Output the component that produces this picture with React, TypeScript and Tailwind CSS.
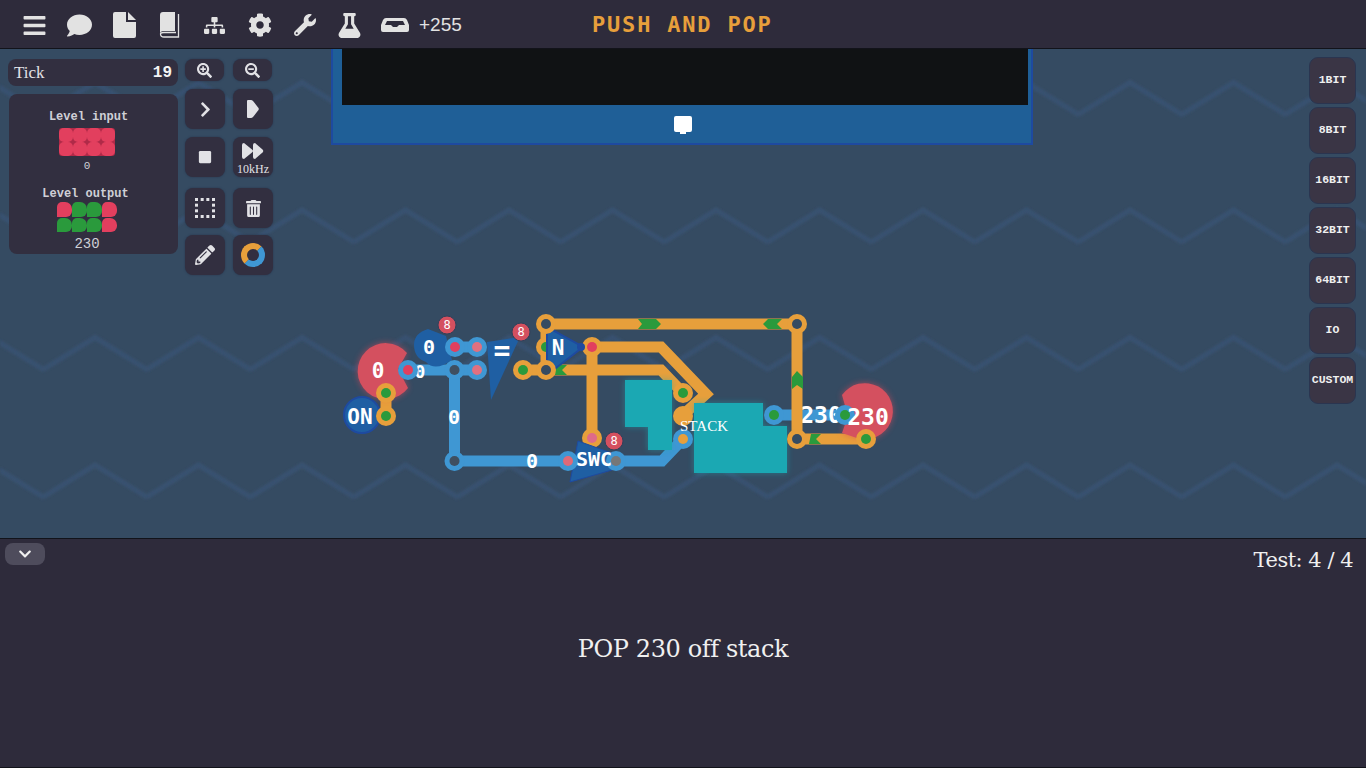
import { FunctionComponent, ReactNode } from "react";
import { FaBars, FaComment, FaSitemap, FaCog, FaWrench, FaFlask, FaSearchPlus, FaSearchMinus, FaChevronRight, FaStop, FaTrashAlt, FaPencilAlt, FaChevronDown } from "react-icons/fa";

const ORANGE = "#e79f3b";
const BLUE = "#3f97d3";
const GREEN = "#2a9a3c";
const RED = "#d4505f";
const PIN_RED = "#e23f5e";
const DARK = "#354b62";
const GATE = "#1f5fa3";
const EDGE = "#1e4aa0";

const FileIcon = () => (
  <svg width={23} height={26} viewBox="0 0 23 26" fill="currentColor">
    <path d="M0 2 Q0 0 2 0 H13 V10 H23 V24 Q23 26 21 26 H2 Q0 26 0 24z" />
    <path d="M15 0 L23 8 H15z" />
  </svg>
);

const BookIcon = () => (
  <svg width={22} height={26} viewBox="0 0 22 26" fill="currentColor">
    <path d="M1 3 Q1 0 4 0 H16 V19 H5 Q1 19 1 22z" />
    <path d="M19.500 2 V25 H5 Q1.500 25 1.500 22 Q1.500 20.500 5 20.500 H17" fill="none" stroke="currentColor" strokeWidth={1.3} />
  </svg>
);

const TrayIcon = () => (
  <svg width={28} height={14} viewBox="0 0 28 14" fill="currentColor">
    <path
      fillRule="evenodd"
      d="M5 0 H23 Q25 0 26 2 L28 7 V12 Q28 14 26 14 H2 Q0 14 0 12 V7 L2 2 Q3 0 5 0z M6 3 L4 7 H10 L12 9 H16 L18 7 H24 L22 3z"
    />
  </svg>
);

const SelectIcon = () => {
  const steps = [0, 5.67, 11.33, 17];
  return (
    <svg width={20} height={20} viewBox="0 0 20 20" fill="currentColor">
      {steps.map((s) => (
        <g key={s}>
          <rect x={s} y={0} width={3} height={3} />
          <rect x={s} y={17} width={3} height={3} />
          <rect x={0} y={s} width={3} height={3} />
          <rect x={17} y={s} width={3} height={3} />
        </g>
      ))}
    </svg>
  );
};

const topIcons = [
  <FaBars className="text-[25px]" />,
  <FaComment className="text-[25px]" />,
  <FileIcon />,
  <BookIcon />,
  <FaSitemap className="text-[21px]" />,
  <FaCog className="text-[24px]" />,
  <FaWrench className="text-[22px]" />,
  <FaFlask className="text-[25px]" />,
  <TrayIcon />,
];

const ToolButton: FunctionComponent<{ children: ReactNode; small?: boolean }> = ({ children, small }) => (
  <div className={`flex flex-col items-center justify-center bg-[#322f40] text-[#e2e2e6] shadow-[0_0_2px_#26334a] ${small ? "h-[22px] w-[39px] rounded-[8px]" : "h-[40px] w-[40px] rounded-[8px]"}`}>
    {children}
  </div>
);

const LevelInputPixels = () => (
  <div className="grid w-[56px] grid-cols-4 rounded-[3px] bg-[#b02a48]">
    {Array.from({ length: 8 }).map((_, i) => (
      <div key={i} className="h-[14px] w-[14px] rounded-[5px] bg-[#e23f5e]" />
    ))}
  </div>
);

const outputBits = [PIN_RED, GREEN, GREEN, PIN_RED, GREEN, GREEN, GREEN, PIN_RED];

const LevelOutputPixels = () => (
  <div className="grid w-[60px] grid-cols-4 gap-y-[1px]">
    {outputBits.map((color, i) => (
      <div
        key={i}
        className="h-[14.500px] w-[15px] rounded-tl-[5px] rounded-tr-[7px] rounded-br-[6px]"
        style={{ backgroundColor: color }}
      />
    ))}
  </div>
);

const Wire: FunctionComponent<{ d: string; color: string }> = ({ d, color }) => (
  <path d={d} fill="none" stroke={color} strokeWidth={11} strokeLinejoin="miter" />
);

const Pin: FunctionComponent<{ x: number; y: number; ring: string; fill: string }> = ({ x, y, ring, fill }) => (
  <g>
    <circle cx={x} cy={y} r={10} fill={ring} />
    <circle cx={x} cy={y} r={5} fill={fill} />
  </g>
);

const Badge: FunctionComponent<{ x: number; y: number }> = ({ x, y }) => (
  <g>
    <circle cx={x} cy={y} r={9} fill={RED} stroke="#33405a" strokeWidth={1} />
    <text x={x} y={y + 4} textAnchor="middle" fontSize={12} fontFamily="'DejaVu Sans Mono', monospace" fill="#fff">8</text>
  </g>
);

const Label: FunctionComponent<{ x: number; y: number; size?: number; children: ReactNode }> = ({ x, y, size = 21, children }) => (
  <text x={x} y={y} textAnchor="middle" fontSize={size} fontWeight={700} fontFamily="'DejaVu Sans Mono', monospace" fill="#fff">{children}</text>
);

const Canvas: FunctionComponent = () => (
  <svg className="absolute left-0 top-0" width={1366} height={490} viewBox="0 49 1366 490">
    <defs>
      <pattern id="zig" width={103.5} height={127.5} patternUnits="userSpaceOnUse" x={43.25} y={78.5}>
        <path d="M-51.750 36 L0 4 L51.750 36 L103.500 4 L155.250 36" transform="translate(51.750 0)" fill="none" stroke="#385170" strokeWidth={5} />
      </pattern>
      <filter id="soft" x="0" y="0" width="100%" height="100%">
        <feGaussianBlur stdDeviation={0.8} />
      </filter>
      <filter id="glow" x="-30%" y="-30%" width="160%" height="160%">
        <feGaussianBlur stdDeviation={3} />
      </filter>
    </defs>
    <rect x={0} y={49} width={1366} height={490} fill="url(#zig)" filter="url(#soft)" />

    {/* console component at the top */}
    <rect x={332} y={40} width={700} height={104} fill="#1f5f97" stroke={EDGE} strokeWidth={2} />
    <rect x={342} y={40} width={686} height={65} fill="#101214" />
    <path d="M674 118 a2 2 0 0 1 2-2 h14 a2 2 0 0 1 2 2 v12 a2 2 0 0 1-2 2 h-4 v2 h-6 v-2 h-4 a2 2 0 0 1-2-2z" fill="#fff" />

    {/* blue wires */}
    <Wire d="M408 370 H477" color={BLUE} />
    <Wire d="M455 347 H477" color={BLUE} />
    <Wire d="M454.500 370 V461 H568" color={BLUE} />
    <Wire d="M616 461 H662 L683 439" color={BLUE} />
    <Wire d="M774 415 H845" color={BLUE} />
    <Label x={420} y={378} size={18}>0</Label>
    <Label x={821} y={423} size={23}>230</Label>

    {/* orange wires */}
    <Wire d="M546 324 H797 V439 H866" color={ORANGE} />
    <Wire d="M546 324 V370 H523" color={ORANGE} />
    <Wire d="M592 347 H661 L706 394 L683 415" color={ORANGE} />
    <Wire d="M546 370 H661 L683 393" color={ORANGE} />
    <Wire d="M592 347 V438" color={ORANGE} />
    <Wire d="M386 393 V416" color={ORANGE} />

    {/* green arrows on the wires */}
    <path d="M638 319 h18 l5 5 l-5 5 h-18 l4-5z" fill={GREEN} />
    <path d="M768 319 h14 l-5 5 l5 5 h-14 l-5-5z" fill={GREEN} />
    <path d="M792 377 l5-6 l6 6 v12 l-6-4 l-5 4z" fill={GREEN} />
    <path d="M821 434 l-5 5 l5 5 h-12 l2-10z" fill={GREEN} />
    <path d="M567 365 l-5 5 l5 5 h-12 v-10z" fill={GREEN} />

    {/* stack */}
    <g filter="url(#glow)" opacity={0.5}>
      <path d="M625 380 h47 v70 h-24 v-23 h-23z" fill="#1ba8b3" />
      <path d="M694 403 h69 v23 h24 v47 h-93z" fill="#1ba8b3" />
    </g>
    <path d="M625 380 h47 v70 h-24 v-23 h-23z" fill="#1ba8b3" />
    <path d="M694 403 h69 v23 h24 v47 h-93z" fill="#1ba8b3" />
    <circle cx={683} cy={416} r={10} fill={ORANGE} />
    <Pin x={683} y={393} ring={ORANGE} fill={GREEN} />
    <Pin x={683} y={439} ring={BLUE} fill={ORANGE} />
    <Pin x={774} y={415} ring={BLUE} fill={GREEN} />

    {/* red input and output */}
    <g filter="url(#glow)" opacity={0.6}>
      <path d="M407 353 A28 28 0 1 0 408 388 L398 369z" fill="#e04a5a" />
      <path d="M842 395 A28 28 0 1 1 857 438 L842 433 L848 416z" fill="#e04a5a" />
    </g>
    <path d="M407 353 A28 28 0 1 0 408 388 L398 369z" fill={RED} />
    <path d="M842 395 A28 28 0 1 1 857 438 L842 433 L848 416z" fill={RED} />

    {/* ON switch */}
    <circle cx={362} cy={415} r={18} fill={GATE} stroke={EDGE} strokeWidth={2} />

    {/* gates */}
    <Pin x={386} y={393} ring={ORANGE} fill={GREEN} />
    <Pin x={386} y={416} ring={ORANGE} fill={GREEN} />
    <Pin x={523} y={370} ring={ORANGE} fill={GREEN} />
    <Pin x={546} y={347} ring={ORANGE} fill={GREEN} />
    <Pin x={592} y={438} ring={ORANGE} fill="#df6a88" />
    <path d="M414 345 Q414 333 428 329 L446 336 L452 360 Q435 372 426 362 Q414 358 414 345z" fill={GATE} />
    <path d="M487 342 L520 337 L491 400z" fill={GATE} />
    <path d="M547 327 V375 L583 347z" fill={GATE} stroke={EDGE} strokeWidth={2} />
    <path d="M578 441 L620 456 L612 470 L570 482z" fill={GATE} stroke={EDGE} strokeWidth={1} />

    <Pin x={408} y={370} ring={BLUE} fill={PIN_RED} />
    <Pin x={455} y={347} ring={BLUE} fill={PIN_RED} />
    <Pin x={477} y={347} ring={BLUE} fill="#e07080" />
    <Pin x={477} y={370} ring={BLUE} fill="#e07080" />
    <Pin x={454.500} y={370} ring={BLUE} fill="#3f4f60" />
    <Pin x={454.500} y={461} ring={BLUE} fill="#3f4f60" />
    <Pin x={568} y={461} ring={BLUE} fill="#df6a78" />
    <Pin x={616} y={461} ring={BLUE} fill="#777" />
    <Pin x={546} y={324} ring={ORANGE} fill={DARK} />
    <Pin x={546} y={370} ring={ORANGE} fill={DARK} />
    <Pin x={592} y={347} ring={ORANGE} fill={PIN_RED} />
    <Pin x={797} y={324} ring={ORANGE} fill={DARK} />
    <Pin x={797} y={439} ring={ORANGE} fill={DARK} />
    <Pin x={866} y={439} ring={ORANGE} fill={GREEN} />
    <Pin x={845} y={415} ring={BLUE} fill={GREEN} />
    <circle cx={581} cy={347} r={4} fill={EDGE} />

    <Label x={378} y={378}>0</Label>
    <Label x={429} y={354} size={20}>0</Label>
    <Label x={454} y={424} size={20}>0</Label>
    <Label x={532} y={468} size={20}>0</Label>
    <Label x={360} y={424}>ON</Label>
    <Label x={502} y={360} size={28}>=</Label>
    <Label x={558} y={355}>N</Label>
    <Label x={594} y={466} size={20}>SWC</Label>
    <Label x={868} y={425} size={23}>230</Label>
    <text x={704} y={431} textAnchor="middle" fontSize={15} fontFamily="'Liberation Serif', serif" fill="#fff">STACK</text>

    <Badge x={447} y={325} />
    <Badge x={521} y={332} />
    <Badge x={614} y={441} />
  </svg>
);

const App: FunctionComponent = () => (
  <div className="flex h-[768px] w-[1366px] flex-col overflow-hidden bg-[#2e2b3b] font-['Liberation_Sans',sans-serif]">
    <header className="relative flex h-[49px] shrink-0 items-center border-b border-[#12131a] bg-[#2e2b3b] pl-[12px] pt-[2px] text-[#e2e2e2]">
      {topIcons.map((icon, i) => (
        <span key={i} className="flex w-[45px] items-center justify-center">{icon}</span>
      ))}
      <span className="ml-[2px] text-[19px]">+255</span>
      <h1 className="absolute left-[592px] top-[11px] font-['DejaVu_Sans_Mono',monospace] text-[22px] font-bold leading-[28px] tracking-[1.8px] text-[#e79f3b]">PUSH AND POP</h1>
    </header>

    <main className="relative h-[489px] shrink-0 overflow-hidden bg-[#354b62]">
      <Canvas />
      <div className="absolute left-[8px] top-[10px] flex gap-[6px]">
        <div className="flex w-[171px] flex-col gap-[8px]">
          <div className="mr-[1px] flex h-[27px] items-center justify-between rounded-[8px] bg-[#322f40] px-[6px] font-['Liberation_Mono',monospace] text-[#e2e2e6]">
            <span className="font-['Liberation_Serif',serif] text-[17px]">Tick</span>
            <span className="text-[16px] font-bold text-[#f4f4f4]">19</span>
          </div>
          <div className="mx-[1px] flex h-[160px] flex-col items-center rounded-[8px] bg-[#322f40] pr-[13px] pt-[17px] font-['Liberation_Mono',monospace] text-[#cfcfd6]">
            <span className="pl-[3px] text-[12px] font-bold leading-[13px]">Level input</span>
            <div className="mt-[4px]"><LevelInputPixels /></div>
            <span className="mt-[3px] text-[11px] leading-[14px]">0</span>
            <span className="mt-[15px] pr-[3px] text-[12px] font-bold leading-[13px]">Level output</span>
            <div className="mt-[1px]"><LevelOutputPixels /></div>
            <span className="mt-[4px] text-[14px] leading-[16px]">230</span>
          </div>
        </div>
        <div className="flex flex-col">
          <div className="grid grid-cols-2 justify-items-start gap-x-[8px]">
            <ToolButton small><FaSearchPlus className="text-[15px]" /></ToolButton>
            <ToolButton small><FaSearchMinus className="text-[15px]" /></ToolButton>
          </div>
          <div className="mt-[8px] grid grid-cols-2 gap-x-[8px] gap-y-[8px]">
            <ToolButton><FaChevronRight className="text-[17px]" /></ToolButton>
            <ToolButton>
              <svg width={12} height={18} viewBox="0 0 12 18" fill="currentColor"><path d="M1 0 H4 Q5 0 6 1 L11.500 8 Q12 9 11.500 10 L6 17 Q5 18 4 18 H1 Q0 18 0 17 V1 Q0 0 1 0z" /></svg>
            </ToolButton>
            <ToolButton><FaStop className="text-[14px]" /></ToolButton>
            <ToolButton>
              <svg width={22} height={16} viewBox="0 0 22 16" fill="currentColor" className="mt-[4px]">
                <path d="M0 2 Q0 0 2 0 L10 6.500 Q12 8 10 9.500 L2 16 Q0 16 0 14z" />
                <path d="M11 2 Q11 0 13 0 L20.500 6.500 Q22 8 20.500 9.500 L13 16 Q11 16 11 14z" />
              </svg>
              <span className="mt-[3px] font-['Liberation_Serif',serif] text-[12px] leading-[14px]">10kHz</span>
            </ToolButton>
          </div>
          <div className="mt-[11px] grid grid-cols-2 gap-x-[8px] gap-y-[7px]">
            <ToolButton><SelectIcon /></ToolButton>
            <ToolButton><FaTrashAlt className="text-[17px]" /></ToolButton>
            <ToolButton><FaPencilAlt className="text-[20px]" /></ToolButton>
            <ToolButton><span className="h-[24px] w-[24px] rounded-full border-[6px] border-t-[#e79f3b] border-r-[#3f97d3] border-b-[#3f97d3] border-l-[#e79f3b]" /></ToolButton>
          </div>
        </div>
      </div>
      <div className="absolute left-[1309px] top-[8px] flex flex-col gap-[3px]">
        {["1BIT", "8BIT", "16BIT", "32BIT", "64BIT", "IO", "CUSTOM"].map((label) => (
          <div key={label} className="flex h-[47px] w-[47px] items-center justify-center rounded-[9px] border border-[#2a3550] bg-[#3a3545] pb-[2px] font-['Liberation_Mono',monospace] text-[11.500px] font-bold text-[#f0f0f0]">{label}</div>
        ))}
      </div>
    </main>

    <footer className="relative flex-1 border-y border-[#12131a] bg-[#2e2b3b]">
      <div className="absolute left-[5px] top-[4px] flex h-[22px] w-[40px] items-center justify-center rounded-[8px] bg-[#4e4c5c] text-[#f0f0f0]"><FaChevronDown className="text-[14px]" /></div>
      <div className="absolute right-[13px] top-[7px] font-['DejaVu_Serif',serif] text-[21px] leading-[28px] tracking-[-0.5px] text-[#f0f0f0]">Test: 4 / 4</div>
      <div className="flex h-[220px] items-center justify-center font-['DejaVu_Serif',serif] text-[24px] tracking-[-0.4px] text-[#f0f0f0]">POP 230 off stack</div>
    </footer>
  </div>
);

export default App;
